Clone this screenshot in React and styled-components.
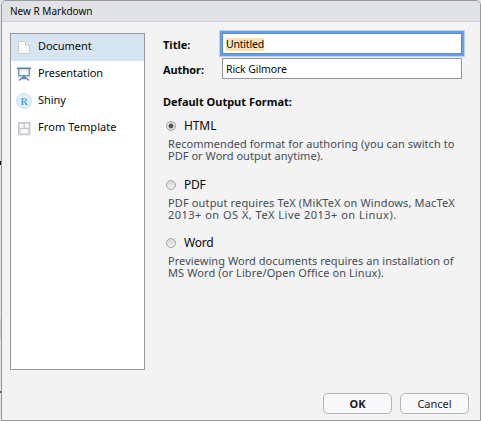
import React, { useState } from "react";
import styled, { createGlobalStyle } from "styled-components";

const Global = createGlobalStyle`
  * { box-sizing: border-box; }
  body { margin: 0; background: #fff; overflow: hidden; }
  button, input { font: inherit; }
`;

const Backdrop = styled.div`
  width: 481px;
  height: 421px;
  padding-left: 1px;
  background:
    linear-gradient(#111, #111) 0 161px / 1px 4px no-repeat,
    linear-gradient(#ccc, #ccc) 0 319px / 1px 20px no-repeat,
    linear-gradient(#55558c, #55558c) 0 391px / 1px 2px no-repeat,
    #e4e4e6;
  font-family: "Noto Sans", "Open Sans", sans-serif;
  color: #0a0a0a;
`;

const Dialog = styled.div`
  display: flex;
  flex-direction: column;
  width: 480px;
  height: 421px;
  border: 1px solid #98989b;
  border-radius: 5px 5px 0 0;
  background: #f3f3f3;
  overflow: hidden;
`;

const TitleBar = styled.div`
  flex: none;
  height: 21px;
  padding-left: 8px;
  border-bottom: 1px solid #d0d3d8;
  background: #e1e2e6;
  font-size: 10px;
  line-height: 21px;
`;

const Text = styled.span`
  display: inline-block;
  white-space: nowrap;
  letter-spacing: ${(p) => p.$ls || 0}px;
`;

const Body = styled.div`
  display: flex;
  gap: 18px;
  height: 348px;
  padding: 11px 0 0 8px;
`;

const List = styled.div`
  flex: none;
  width: 135px;
  height: 337px;
  border: 1px solid #98989c;
  background: #fff;
`;

const Item = styled.div`
  display: flex;
  align-items: center;
  gap: 6px;
  height: 27px;
  padding-left: 5px;
  font-size: 11px;
  line-height: 25px;
  background: ${(p) => (p.$active ? "#d6e5f2" : "transparent")};
  svg { flex: none; margin-top: -1px; }
  span { margin-top: -4px; }
`;

const Form = styled.div`
  width: 310px;
`;

const Field = styled.label`
  display: grid;
  grid-template-columns: 59px 240px;
  align-items: center;
  height: 21px;
  margin-bottom: 4px;
  font-size: 11px;
  font-weight: 700;
  > span { padding-top: 2px; }
`;

const Input = styled.div`
  display: flex;
  align-items: flex-start;
  height: 21px;
  padding: 4px 3px 0;
  border: 1px solid ${(p) => (p.$focus ? "#5a8bd0" : "#949599")};
  background: #fff;
  box-shadow: ${(p) => (p.$focus ? "0 0 0 2px #699de5, 0 0 0 3px #b5d0f5" : "none")};
  font-size: 10.5px;
  font-weight: 400;
  line-height: 13px;
`;

const Marked = styled(Text)`
  background: #fbe2b1;
`;

const Heading = styled.div`
  margin-top: 12px;
  height: 25px;
  font-size: 11px;
  font-weight: 700;
  line-height: 22px;
`;

const Option = styled.div`
  height: 58.5px;
  padding-left: 3px;
`;

const Choice = styled.div`
  display: flex;
  align-items: center;
  gap: 8px;
  height: 20px;
  font-size: 12px;
  line-height: 20px;
  cursor: default;
`;

const Radio = styled.div`
  width: 10px;
  height: 10px;
  border: 1px solid #a5a5a5;
  border-radius: 50%;
  background: ${(p) =>
    p.$on
      ? "radial-gradient(circle, #555 0 2px, #dedede 2.8px)"
      : "linear-gradient(#d5d5d5, #f0f0f0)"};
`;

const Description = styled.div`
  display: flex;
  flex-direction: column;
  padding: 2px 0 0 2px;
  color: #454c55;
  font-size: 11px;
  line-height: 12px;
`;

const Footer = styled.div`
  display: flex;
  justify-content: flex-end;
  gap: 8px;
  padding: 23px 11px 0 0;
`;

const Button = styled.button`
  width: 69px;
  height: 21px;
  padding: 0;
  border: 1px solid #b5b5b8;
  border-radius: 5px;
  background: #f8f8fa;
  color: #1d1d1f;
  font-size: 11px;
  font-weight: ${(p) => (p.$primary ? 700 : 400)};
  line-height: 17px;
`;

const DocumentIcon = () => (
  <svg width="16" height="16" viewBox="0 0 16 16">
    <path d="M2.5 2.5h7l4 4v8h-11z" fill="#fdfdfd" stroke="#c9cdd2" />
    <path d="M9.5 2.5v4h4" fill="#eef1f4" stroke="#c9cdd2" />
  </svg>
);

const PresentationIcon = () => (
  <svg width="16" height="16" viewBox="0 0 16 16">
    <path d="M2.7 2.5v7.2h10.6V2.5" fill="#f5f9fc" stroke="#7698ba" strokeWidth="1.4" />
    <path d="M1 2.4h14" stroke="#5f7daa" strokeWidth="1.8" />
    <path d="M8 9.5v3M7 11l-4 3.5M9 11l4 3.5M6 12.6h4" fill="none" stroke="#627faa" strokeWidth="1.5" />
  </svg>
);

const ShinyIcon = () => (
  <svg width="16" height="16" viewBox="0 0 16 16">
    <circle cx="8" cy="8" r="7.4" fill="#e8f4fb" stroke="#bddcee" />
    <circle cx="8" cy="8" r="5.8" fill="none" stroke="#cfe7f4" strokeWidth=".8" />
    <text x="8.2" y="11.5" textAnchor="middle" fontFamily="Liberation Serif, serif" fontSize="10" fontWeight="700" fill="#4ba6da">R</text>
  </svg>
);

const TemplateIcon = () => (
  <svg width="16" height="16" viewBox="0 0 16 16">
    <path d="M2.8 2.8h10.8v11.6H2.8z" fill="#fafafa" stroke="#c6c9ce" strokeWidth="1.7" />
    <path d="M3 8.5h10.5M8.2 2.5v6" stroke="#c6c9ce" strokeWidth="1.6" />
    <path d="M4.5 9v5M12 9v5" stroke="#dcdee1" strokeWidth="1.2" />
  </svg>
);

const items = [
  ["Document", DocumentIcon, -0.05],
  ["Presentation", PresentationIcon, -0.07],
  ["Shiny", ShinyIcon, -0.05],
  ["From Template", TemplateIcon, 0.08],
];

const formats = [
  ["HTML", -0.1, [["Recommended format for authoring (you can switch to", 0.045], ["PDF or Word output anytime).", 0.04]]],
  ["PDF", -0.2, [["PDF output requires TeX (MiKTeX on Windows, MacTeX", 0.14], ["2013+ on OS X, TeX Live 2013+ on Linux).", 0.48]]],
  ["Word", -0.2, [["Previewing Word documents requires an installation of", 0.055], ["MS Word (or Libre/Open Office on Linux).", 0.1]]],
];

export default function App() {
  const [category, setCategory] = useState("Document");
  const [format, setFormat] = useState("HTML");
  return (
    <Backdrop>
      <Global />
      <Dialog role="dialog">
        <TitleBar><Text>New R Markdown</Text></TitleBar>
        <Body>
          <List>
            {items.map(([name, Icon, ls]) => (
              <Item key={name} $active={name === category} onClick={() => setCategory(name)}>
                <Icon />
                <Text $ls={ls}>{name}</Text>
              </Item>
            ))}
          </List>
          <Form>
            <Field><Text>Title:</Text><Input $focus><Marked $ls={-0.2}>Untitled</Marked></Input></Field>
            <Field><Text $ls={-0.1}>Author:</Text><Input><Text $ls={-0.08}>Rick Gilmore</Text></Input></Field>
            <Heading><Text>Default Output Format:</Text></Heading>
            {formats.map(([name, ls, lines]) => (
              <Option key={name} onClick={() => setFormat(name)}>
                <Choice><Radio $on={name === format} /><Text $ls={ls}>{name}</Text></Choice>
                <Description>
                  {lines.map(([line, spacing]) => <Text key={line} $ls={spacing}>{line}</Text>)}
                </Description>
              </Option>
            ))}
          </Form>
        </Body>
        <Footer>
          <Button $primary><Text>OK</Text></Button>
          <Button><Text>Cancel</Text></Button>
        </Footer>
      </Dialog>
    </Backdrop>
  );
}
